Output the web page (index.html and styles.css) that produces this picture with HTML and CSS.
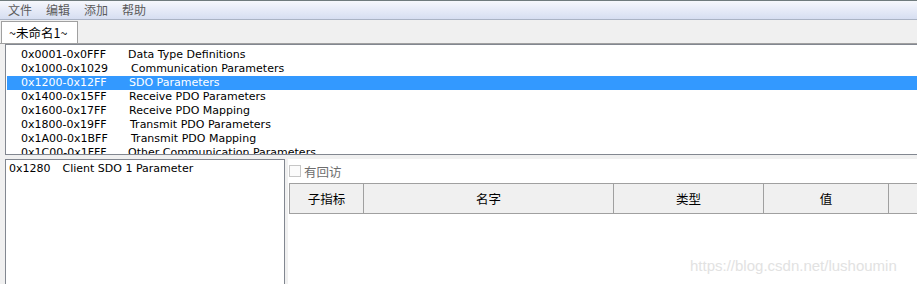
FILE: index.html
```html
<!DOCTYPE html>
<html lang="zh">
<head>
<meta charset="utf-8">
<title>~未命名1~</title>
<link rel="stylesheet" href="styles.css">
</head>
<body>
<div class="app">
  <div class="menubar">
    <span class="menu-item">文件</span>
    <span class="menu-item">编辑</span>
    <span class="menu-item">添加</span>
    <span class="menu-item">帮助</span>
  </div>
  <div class="tabstrip">
    <div class="tab">~未命名1~</div>
  </div>
  <div class="tabpage">
    <div class="rangelist">
      <div class="row"><span class="range">0x0001-0x0FFF</span><span class="name">Data Type Definitions</span></div>
      <div class="row"><span class="range">0x1000-0x1029</span><span class="name shift3">Communication Parameters</span></div>
      <div class="row selected"><span class="range">0x1200-0x12FF</span><span class="name shift1">SDO Parameters</span></div>
      <div class="row"><span class="range">0x1400-0x15FF</span><span class="name shift1">Receive PDO Parameters</span></div>
      <div class="row"><span class="range">0x1600-0x17FF</span><span class="name shift1">Receive PDO Mapping</span></div>
      <div class="row"><span class="range">0x1800-0x19FF</span><span class="name shift2">Transmit PDO Parameters</span></div>
      <div class="row"><span class="range">0x1A00-0x1BFF</span><span class="name shift3">Transmit PDO Mapping</span></div>
      <div class="row"><span class="range">0x1C00-0x1FFF</span><span class="name">Other Communication Parameters</span></div>
    </div>
    <div class="lower">
      <div class="objlist">
        <div class="objrow"><span class="idx">0x1280</span><span class="objname">Client SDO 1 Parameter</span></div>
      </div>
      <div class="detail">
        <label class="check"><span class="box"></span><span class="check-label">有回访</span></label>
        <div class="grid-header">
          <div class="hcell c1">子指标</div>
          <div class="hcell c2">名字</div>
          <div class="hcell c3">类型</div>
          <div class="hcell c4">值</div>
          <div class="hcell c5"></div>
        </div>
      </div>
    </div>
  </div>
  <div class="watermark">https://blog.csdn.net/lushoumin</div>
</div>
</body>
</html>
```
FILE: styles.css
```css
html, body {
  margin: 0;
  padding: 0;
}
body {
  width: 917px;
  height: 284px;
  overflow: hidden;
  background: #f0f0f0;
  font-family: "DejaVu Sans", "Noto Sans CJK SC", sans-serif;
  font-size: 11px;
  color: #000;
}
.app {
  position: relative;
  width: 917px;
  height: 284px;
  overflow: hidden;
  display: flex;
  flex-direction: column;
}
.menubar {
  flex: none;
  height: 18px;
  border-top: 1px solid #6f7b7d;
  border-bottom: 1px solid #aab3c4;
  background: linear-gradient(#f6f8fc, #e9edf8 40%, #d6def1);
  display: flex;
  align-items: center;
  padding-left: 1px;
  font-family: "Noto Sans CJK SC", sans-serif;
  font-size: 12px;
  color: #5b5b5b;
}
.menu-item {
  padding: 0 7px;
  line-height: 18px;
}
.tabstrip {
  flex: none;
  height: 22px;
  padding-top: 1px;
  padding-left: 1px;
  display: flex;
  border-bottom: 1px solid #a0a0a0;
}
.tab {
  width: 77px;
  height: 22px;
  margin-bottom: -1px;
  background: #fff;
  border: 1px solid #a0a0a0;
  border-bottom: none;
  font-family: "Noto Sans CJK SC", sans-serif;
  font-size: 12.5px;
  line-height: 21px;
  padding-left: 7px;
  box-sizing: border-box;
  position: relative;
  z-index: 1;
}
.tabpage {
  flex: 1;
  display: flex;
  flex-direction: column;
  gap: 4px;
  min-height: 0;
}
.rangelist {
  flex: none;
  height: 106px;
  margin-left: 5px;
  border: 1px solid #828790;
  border-right: none;
  background: #fff;
  overflow: hidden;
  padding-top: 3px;
  padding-left: 1px;
}
.row {
  height: 14px;
  line-height: 14px;
  display: flex;
  white-space: nowrap;
}
.row.selected {
  background: #3399ff;
  color: #fff;
}
.range {
  width: 107px;
  padding-left: 14px;
  flex: none;
}
.name.shift1 { padding-left: 1px; }
.name.shift2 { padding-left: 2px; }
.name.shift3 { padding-left: 3px; }
.lower {
  flex: 1;
  display: flex;
  gap: 3px;
  padding-left: 5px;
  min-height: 0;
}
.objlist {
  flex: none;
  width: 272px;
  border: 1px solid #828790;
  border-bottom: none;
  background: #fff;
  padding: 2px 3px;
}
.objrow {
  display: flex;
  gap: 12px;
  line-height: 14px;
  white-space: nowrap;
}
.detail {
  flex: 1;
  min-width: 0;
  overflow: hidden;
  background: #fff;
  display: flex;
  flex-direction: column;
}
.check {
  height: 24px;
  display: flex;
  align-items: center;
  padding-left: 1px;
  gap: 3px;
}
.box {
  width: 10px;
  height: 10px;
  border: 1px solid #c6c6c6;
  background: #fbfbfb;
}
.check-label {
  font-family: "Noto Sans CJK SC", sans-serif;
  font-size: 12.5px;
  color: #6d6d6d;
}
.grid-header {
  display: flex;
  height: 29px;
  border-top: 1px solid #a0a0a0;
  border-bottom: 1px solid #a0a0a0;
  margin-left: 1px;
  border-left: 1px solid #a0a0a0;
}
.hcell {
  flex: none;
  background: #f0f0f0;
  border-right: 1px solid #a0a0a0;
  display: flex;
  align-items: center;
  justify-content: center;
  font-family: "Noto Sans CJK SC", sans-serif;
  font-size: 12.5px;
}
.c1 { width: 73px; }
.c2 { width: 249px; }
.c3 { width: 149px; }
.c4 { width: 124px; }
.c5 { width: 60px; }
.watermark {
  position: absolute;
  left: 690px;
  top: 257px;
  font-family: "Liberation Sans", sans-serif;
  font-size: 15px;
  color: #e2e2e2;
  white-space: nowrap;
}
```
